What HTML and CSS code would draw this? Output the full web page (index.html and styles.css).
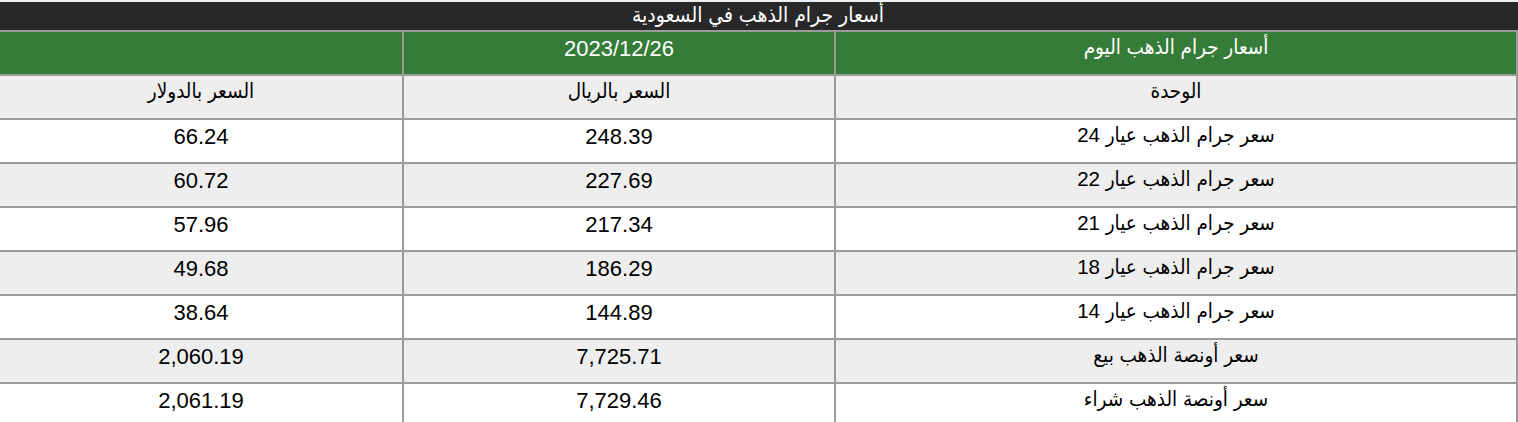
FILE: index.html
```html
<!DOCTYPE html>
<html lang="ar" dir="rtl">
<head>
<meta charset="utf-8">
<title>أسعار جرام الذهب في السعودية</title>
<link rel="stylesheet" href="styles.css">
</head>
<body>
<table class="gold">
  <caption class="gold-title">أسعار جرام الذهب في السعودية</caption>
  <colgroup>
    <col class="col-unit">
    <col class="col-sar">
    <col class="col-usd">
  </colgroup>
  <thead>
    <tr class="row-head">
      <th class="ar">أسعار جرام الذهب اليوم</th>
      <th>2023/12/26</th>
      <th></th>
    </tr>
    <tr class="row-sub">
      <th class="ar">الوحدة</th>
      <th class="ar">السعر بالريال</th>
      <th class="ar">السعر بالدولار</th>
    </tr>
  </thead>
  <tbody>
    <tr><td class="ar">سعر جرام الذهب عيار 24</td><td>248.39</td><td>66.24</td></tr>
    <tr><td class="ar">سعر جرام الذهب عيار 22</td><td>227.69</td><td>60.72</td></tr>
    <tr><td class="ar">سعر جرام الذهب عيار 21</td><td>217.34</td><td>57.96</td></tr>
    <tr><td class="ar">سعر جرام الذهب عيار 18</td><td>186.29</td><td>49.68</td></tr>
    <tr><td class="ar">سعر جرام الذهب عيار 14</td><td>144.89</td><td>38.64</td></tr>
    <tr><td class="ar">سعر أونصة الذهب بيع</td><td>7,725.71</td><td>2,060.19</td></tr>
    <tr><td class="ar">سعر أونصة الذهب شراء</td><td>7,729.46</td><td>2,061.19</td></tr>
  </tbody>
</table>
</body>
</html>
```

FILE: styles.css
```css
html, body {
  margin: 0;
  padding: 0;
}
body {
  background: #eceef1;
  padding-top: 2px;
  font-family: "Liberation Sans", "DejaVu Sans Condensed", "DejaVu Sans", sans-serif;
  font-size: 22px;
  color: #000;
}
.gold {
  width: 100%;
  border-collapse: collapse;
  table-layout: fixed;
  background: #fff;
}
.gold-title {
  background: #282828;
  color: #fff;
  height: 28px;
  line-height: 26px;
  font-size: 21px;
  font-weight: normal;
  text-align: center;
}
.col-unit { width: 682px; }
.col-sar { width: 432px; }
.col-usd { width: 404px; }
.gold th,
.gold td {
  border: 2px solid #9b9b9b;
  height: 38px;
  padding: 4px 0 0;
  line-height: 26px;
  vertical-align: top;
  text-align: center;
  font-weight: normal;
}
.gold .ar {
  font-size: 20.5px;
  line-height: 25px;
  height: 40px;
  padding-top: 2px;
}
.row-head th {
  background: #367c39;
  color: #fff;
}
.row-sub th {
  background: #eeeeee;
}
.gold tbody tr:nth-child(even) td {
  background: #eeeeee;
}
```
